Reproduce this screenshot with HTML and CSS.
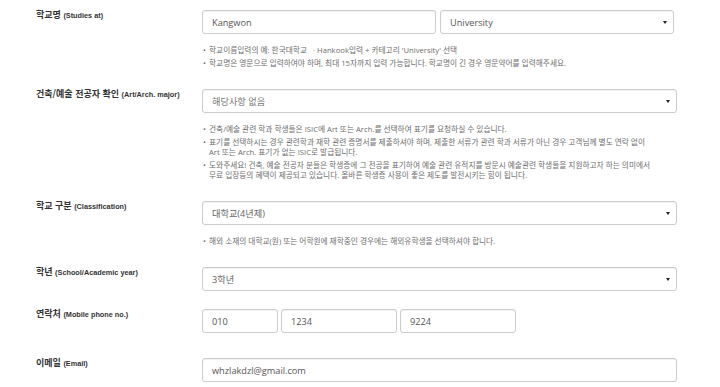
FILE: index.html
```html
<!DOCTYPE html>
<html lang="ko">
<head>
    <meta charset="UTF-8">
    <meta name="viewport" content="width=device-width, initial-scale=1.0">
    <title>ISIC 신청서</title>
    <link rel="stylesheet" href="styles.css">
</head>
<body>
    <form class="apply-form">
        <!-- 학교명 -->
        <div class="row">
            <label class="row-label">학교명 <span class="en">(Studies at)</span></label>
            <div class="row-field">
                <div class="field-pair">
                    <input class="input school-name" type="text" value="Kangwon">
                    <div class="select-wrap school-type">
                        <select class="select select-dark">
                            <option>University</option>
                        </select>
                    </div>
                </div>
                <ul class="notes">
                    <li><span>학교이름입력의 예: 한국대학교 &nbsp; · Hankook입력 + 카테고리 'University' 선택</span></li>
                    <li><span>학교명은 영문으로 입력하여야 하며, 최대 15자까지 입력 가능합니다. 학교명이 긴 경우 영문약어를 입력해주세요.</span></li>
                </ul>
            </div>
        </div>

        <!-- 전공 -->
        <div class="row">
            <label class="row-label">건축/예술 전공자 확인 <span class="en">(Art/Arch. major)</span></label>
            <div class="row-field">
                <div class="select-wrap">
                    <select class="select select-muted">
                        <option>해당사항 없음</option>
                    </select>
                </div>
                <ul class="notes">
                    <li><span>건축/예술 관련 학과 학생들은 ISIC에 Art 또는 Arch.를 선택하여 표기를 요청하실 수 있습니다.</span></li>
                    <li><span>표기를 선택하시는 경우 관련학과 재학 관련 증명서를 제출하셔야 하며, 제출한 서류가 관련 학과 서류가 아닌 경우 고객님께 별도 연락 없이<br>Art 또는 Arch. 표기가 없는 ISIC로 발급됩니다.</span></li>
                    <li><span>도와주세요! 건축, 예술 전공자 분들은 학생증에 그 전공을 표기하여 예술 관련 유적지를 방문시 예술관련 학생들을 지원하고자 하는 의미에서<br>무료 입장등의 혜택이 제공되고 있습니다. 올바른 학생증 사용이 좋은 제도를 발전시키는 힘이 됩니다.</span></li>
                </ul>
            </div>
        </div>

        <!-- 학교 구분 -->
        <div class="row">
            <label class="row-label">학교 구분 <span class="en">(Classification)</span></label>
            <div class="row-field">
                <div class="select-wrap">
                    <select class="select">
                        <option>대학교(4년제)</option>
                    </select>
                </div>
                <ul class="notes">
                    <li><span>해외 소재의 대학교(원) 또는 어학원에 재학중인 경우에는 해외유학생을 선택하셔야 합니다.</span></li>
                </ul>
            </div>
        </div>

        <!-- 학년 -->
        <div class="row row-short">
            <label class="row-label">학년 <span class="en">(School/Academic year)</span></label>
            <div class="row-field">
                <div class="select-wrap">
                    <select class="select">
                        <option>3학년</option>
                    </select>
                </div>
            </div>
        </div>

        <!-- 연락처 -->
        <div class="row row-wide">
            <label class="row-label">연락처 <span class="en">(Mobile phone no.)</span></label>
            <div class="row-field">
                <div class="phone">
                    <input class="input phone-first" type="text" value="010">
                    <input class="input phone-part" type="text" value="1234">
                    <input class="input phone-part" type="text" value="9224">
                </div>
            </div>
        </div>

        <!-- 이메일 -->
        <div class="row">
            <label class="row-label">이메일 <span class="en">(Email)</span></label>
            <div class="row-field">
                <input class="input" type="text" value="whzlakdzl@gmail.com">
            </div>
        </div>
    </form>
</body>
</html>
```

FILE: styles.css
```css
* {
    box-sizing: border-box;
    margin: 0;
    padding: 0;
}

body {
    background: #fff;
    color: #555;
    font-family: "Open Sans", "Noto Sans CJK KR", sans-serif;
}

.apply-form {
    padding: 10px 0 0 36px;
}

.row {
    display: flex;
    margin-bottom: 21px;
}

.row-short {
    margin-bottom: 18px;
}

.row-wide {
    margin-bottom: 25px;
}

.row-label {
    width: 166px;
    flex-shrink: 0;
    font-family: "Noto Sans CJK KR", sans-serif;
    font-weight: 700;
    font-size: 9px;
    line-height: 10px;
    color: #333;
}

.row-label .en {
    font-family: "Liberation Sans", Arial, sans-serif;
    font-size: 7.3px;
}

.row-field {
    width: 475px;
}

.field-pair {
    display: flex;
    gap: 4px;
}

.input,
.select {
    display: block;
    width: 100%;
    height: 24px;
    padding: 0 9px;
    border: 1px solid #ccc;
    border-radius: 3px;
    background: #fff;
    box-shadow: inset 0 1px 1px rgba(0, 0, 0, 0.06);
    font-family: "Open Sans", "Noto Sans CJK KR", sans-serif;
    font-size: 9.2px;
    color: #555;
    outline: none;
}

.field-pair .school-name,
.field-pair .school-type {
    width: 234px;
    flex: none;
}

.select {
    appearance: none;
    -webkit-appearance: none;
    color: #666;
}

.select-dark {
    color: #555;
}

.select-muted {
    color: #777;
}

.select-wrap {
    position: relative;
}

.select-wrap::after {
    content: "";
    position: absolute;
    right: 7px;
    top: 11px;
    border-left: 2.5px solid transparent;
    border-right: 2.5px solid transparent;
    border-top: 3px solid #222;
    pointer-events: none;
}

.phone {
    display: flex;
    gap: 3px;
}

.phone .phone-first {
    width: 76px;
}

.phone .phone-part {
    width: 116px;
}

.notes {
    list-style: none;
    margin-top: 11px;
    font-size: 7.7px;
    line-height: 10px;
    color: #6e6e6e;
}

.notes li {
    display: flex;
    margin-bottom: 3px;
    white-space: nowrap;
}

.notes li:last-child {
    margin-bottom: 0;
}

.notes li::before {
    content: "•";
    width: 6px;
    flex-shrink: 0;
    padding-left: 1px;
}
```
